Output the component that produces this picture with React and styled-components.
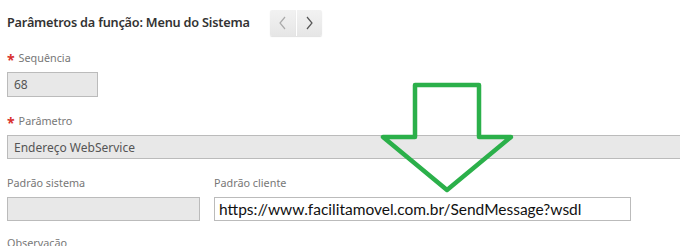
import React from "react";
import styled, { createGlobalStyle } from "styled-components";

const Global = createGlobalStyle`
  html, body {
    margin: 0;
    background: #fff;
    overflow: hidden;
  }
  body {
    font-family: "Noto Sans", "Open Sans", sans-serif;
  }
`;

const Page = styled.div`
  position: relative;
  width: 680px;
  height: 246px;
  overflow: hidden;
  padding-left: 7px;
  box-sizing: border-box;
`;

const Header = styled.div`
  display: flex;
  align-items: center;
  height: 44px;
  gap: 20px;
`;

const Title = styled.h1`
  margin: 0;
  font-size: 12.7px;
  font-weight: 600;
  color: #333;
  letter-spacing: -0.2px;
`;

const NavGroup = styled.div`
  display: flex;
  height: 26px;
  margin-top: 1px;
`;

const NavButton = styled.button`
  width: 26px;
  height: 26px;
  padding: 0;
  border: none;
  border-radius: ${(p) => (p.$left ? "2px 0 0 2px" : "0 2px 2px 0")};
  border-left: ${(p) => (p.$left ? "none" : "1px solid #fff")};
  background: linear-gradient(#f2f2f2, #e6e6e6);
  box-shadow: 0 1px 1px rgba(0, 0, 0, 0.12);
  display: flex;
  align-items: center;
  justify-content: center;
  color: ${(p) => (p.$left ? "#aaa" : "#555")};
`;

const Form = styled.div`
  width: 720px;
  display: flex;
  flex-direction: column;
  gap: 16px;
  margin-top: 6px;
`;

const Row = styled.div`
  display: flex;
  gap: 14px;
`;

const Field = styled.div`
  display: flex;
  flex-direction: column;
  gap: 6px;
  width: ${(p) => p.$width || "auto"};
  margin-top: ${(p) => p.$pull || 0};
`;

const Label = styled.label`
  font-size: 10.8px;
  color: #777;
  height: 16px;
  line-height: 16px;
  display: flex;
  align-items: center;
  gap: 4px;
`;

const Star = styled.span`
  color: #d9312f;
  font-size: 14px;
  font-weight: bold;
  line-height: 1;
  margin-top: 3px;
`;

const Input = styled.div`
  box-sizing: border-box;
  height: ${(p) => (p.$tall ? "25px" : "24px")};
  border: 1px solid #bbb;
  background: ${(p) => (p.$editable ? "#fff" : "#e8e8e8")};
  padding: 0 ${(p) => (p.$editable ? "4px" : "6px")};
  display: flex;
  align-items: center;
  font-size: ${(p) => (p.$editable ? "15.5px" : "12px")};
  font-family: ${(p) =>
    p.$editable ? 'Lato, "Noto Sans", sans-serif' : "inherit"};
  color: ${(p) => (p.$editable ? "#111" : "#555")};
  white-space: nowrap;
`;

const Arrow = styled.svg`
  position: absolute;
  left: 378px;
  top: 79px;
  pointer-events: none;
`;

const Chevron = ({ dir }) => (
  <svg width="9" height="14" viewBox="0 0 9 14">
    <path
      d={dir === "left" ? "M7 1 L2 7 L7 13" : "M2 1 L7 7 L2 13"}
      fill="none"
      stroke="currentColor"
      strokeWidth="1.2"
    />
  </svg>
);

export default function App() {
  return (
    <Page>
      <Global />
      <Header>
        <Title>Parâmetros da função: Menu do Sistema</Title>
        <NavGroup>
          <NavButton $left>
            <Chevron dir="left" />
          </NavButton>
          <NavButton>
            <Chevron dir="right" />
          </NavButton>
        </NavGroup>
      </Header>
      <Form>
        <Field $width="91px">
          <Label>
            <Star>*</Star>Sequência
          </Label>
          <Input $tall>68</Input>
        </Field>
        <Field>
          <Label>
            <Star>*</Star>Parâmetro
          </Label>
          <Input>Endereço WebService</Input>
        </Field>
        <Row>
          <Field $width="193px">
            <Label>Padrão sistema</Label>
            <Input />
          </Field>
          <Field $width="417px">
            <Label>Padrão cliente</Label>
            <Input $editable>https://www.facilitamovel.com.br/SendMessage?wsdl</Input>
          </Field>
        </Row>
        <Field $pull="-2px">
          <Label>Observação</Label>
        </Field>
      </Form>
      <Arrow width="140" height="116" viewBox="378 79 140 116">
        <path
          d="M415 85 L479 85 L479 137 L511 137 L447 190 L383 137 L415 137 Z"
          fill="none"
          stroke="#2bb04a"
          strokeWidth="4.5"
          strokeLinejoin="round"
        />
      </Arrow>
    </Page>
  );
}
